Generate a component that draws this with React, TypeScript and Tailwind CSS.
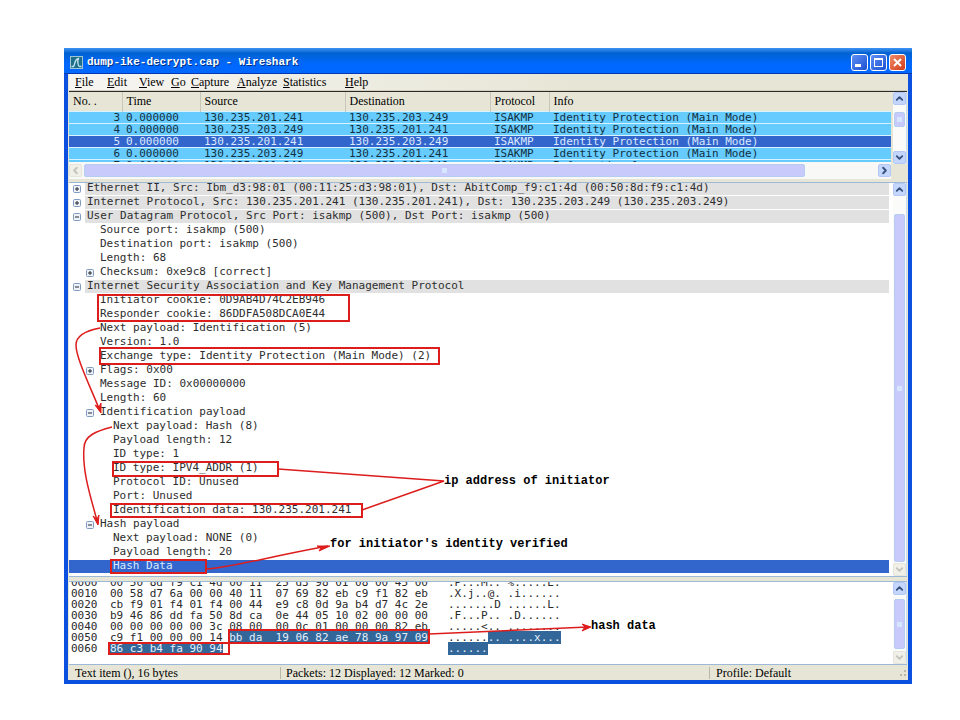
import clsx from 'clsx'
import { ChevronDown, ChevronLeft, ChevronRight, ChevronUp } from 'lucide-react'

interface Packet {
  no: number
  time: string
  source: string
  destination: string
  info: string
}

interface TreeNode {
  text: string
  level: 0 | 1 | 2
  toggle?: '+' | '-'
  selected?: boolean
}

interface HexRow {
  offset: string
  hex: [string, string]
  ascii: [string, string]
}

const MENU = [
  { label: 'File', width: 'w-8' },
  { label: 'Edit', width: 'w-8' },
  { label: 'View', width: 'w-8' },
  { label: 'Go', width: 'w-5' },
  { label: 'Capture', width: 'w-[46px]' },
  { label: 'Analyze', width: 'w-[46px]' },
  { label: 'Statistics', width: 'w-[62px]' },
  { label: 'Help', width: 'w-8' },
]

const COLUMNS = [
  { label: 'No. .', width: 'w-[53px]' },
  { label: 'Time', width: 'w-[78px]' },
  { label: 'Source', width: 'w-[145px]' },
  { label: 'Destination', width: 'w-[145px]' },
  { label: 'Protocol', width: 'w-[59px]' },
  { label: 'Info', width: '' },
]

const A = '130.235.201.241'
const B = '130.235.203.249'
const MAIN_MODE = 'Identity Protection (Main Mode)'

const PACKETS: Packet[] = [
  { no: 3, time: '0.000000', source: A, destination: B, info: MAIN_MODE },
  { no: 4, time: '0.000000', source: B, destination: A, info: MAIN_MODE },
  { no: 5, time: '0.000000', source: A, destination: B, info: MAIN_MODE },
  { no: 6, time: '0.000000', source: B, destination: A, info: MAIN_MODE },
  { no: 7, time: '0.000000', source: A, destination: B, info: 'Informational' },
]

const TREE: TreeNode[] = [
  { level: 0, toggle: '+', text: 'Ethernet II, Src: Ibm_d3:98:01 (00:11:25:d3:98:01), Dst: AbitComp_f9:c1:4d (00:50:8d:f9:c1:4d)' },
  { level: 0, toggle: '+', text: 'Internet Protocol, Src: 130.235.201.241 (130.235.201.241), Dst: 130.235.203.249 (130.235.203.249)' },
  { level: 0, toggle: '-', text: 'User Datagram Protocol, Src Port: isakmp (500), Dst Port: isakmp (500)' },
  { level: 1, text: 'Source port: isakmp (500)' },
  { level: 1, text: 'Destination port: isakmp (500)' },
  { level: 1, text: 'Length: 68' },
  { level: 1, toggle: '+', text: 'Checksum: 0xe9c8 [correct]' },
  { level: 0, toggle: '-', text: 'Internet Security Association and Key Management Protocol' },
  { level: 1, text: 'Initiator cookie: 0D9AB4D74C2EB946' },
  { level: 1, text: 'Responder cookie: 86DDFA508DCA0E44' },
  { level: 1, text: 'Next payload: Identification (5)' },
  { level: 1, text: 'Version: 1.0' },
  { level: 1, text: 'Exchange type: Identity Protection (Main Mode) (2)' },
  { level: 1, toggle: '+', text: 'Flags: 0x00' },
  { level: 1, text: 'Message ID: 0x00000000' },
  { level: 1, text: 'Length: 60' },
  { level: 1, toggle: '-', text: 'Identification payload' },
  { level: 2, text: 'Next payload: Hash (8)' },
  { level: 2, text: 'Payload length: 12' },
  { level: 2, text: 'ID type: 1' },
  { level: 2, text: 'ID type: IPV4_ADDR (1)' },
  { level: 2, text: 'Protocol ID: Unused' },
  { level: 2, text: 'Port: Unused' },
  { level: 2, text: 'Identification data: 130.235.201.241' },
  { level: 1, toggle: '-', text: 'Hash payload' },
  { level: 2, text: 'Next payload: NONE (0)' },
  { level: 2, text: 'Payload length: 20' },
  { level: 2, text: 'Hash Data', selected: true },
]

// second entry of each pair is the highlighted part
const HEX: HexRow[] = [
  { offset: '0000', hex: ['00 50 8d f9 c1 4d 00 11  25 d3 98 01 08 00 45 00', ''], ascii: ['.P...M.. %.....E.', ''] },
  { offset: '0010', hex: ['00 58 d7 6a 00 00 40 11  07 69 82 eb c9 f1 82 eb', ''], ascii: ['.X.j..@. .i......', ''] },
  { offset: '0020', hex: ['cb f9 01 f4 01 f4 00 44  e9 c8 0d 9a b4 d7 4c 2e', ''], ascii: ['.......D ......L.', ''] },
  { offset: '0030', hex: ['b9 46 86 dd fa 50 8d ca  0e 44 05 10 02 00 00 00', ''], ascii: ['.F...P.. .D......', ''] },
  { offset: '0040', hex: ['00 00 00 00 00 3c 08 00  00 0c 01 00 00 00 82 eb', ''], ascii: ['.....<.. ........', ''] },
  { offset: '0050', hex: ['c9 f1 00 00 00 14 ', 'bb da  19 06 82 ae 78 9a 97 09'], ascii: ['......', '.. ....x...'] },
  { offset: '0060', hex: ['', '86 c3 b4 fa 90 94'], ascii: ['', '......'] },
]

const CHEVRONS = { up: ChevronUp, down: ChevronDown, left: ChevronLeft, right: ChevronRight }

function ScrollButton({ dir, disabled = false }: { dir: keyof typeof CHEVRONS; disabled?: boolean }) {
  const Icon = CHEVRONS[dir]
  return (
    <button
      aria-label={`Scroll ${dir}`}
      disabled={disabled}
      className={clsx(
        'w-[13px] h-[13px] shrink-0 rounded-[2px] flex items-center justify-center border',
        disabled ? 'bg-[#f0efe8] border-[#e6e5dc] text-[#c4c3bb]' : 'bg-[#c4d6fc] border-[#b3c8f2] text-[#33507f]',
      )}
    >
      <Icon size={11} strokeWidth={4} />
    </button>
  )
}

function Thumb({ className }: { className: string }) {
  return (
    <div
      className={clsx(
        'rounded-[2px] bg-[#c8cafc] border border-[#b4cdf0] flex items-center justify-center',
        className,
      )}
    >
      <span className="w-[5px] h-[5px] bg-[#d6e6ff]" />
    </div>
  )
}

function TitleBar() {
  return (
    <header className="h-[26px] shrink-0 flex items-center px-[6px] pt-[3px] gap-1 border-b border-[#0038b8] bg-linear-to-b from-[#3d95f5] via-[#0062d0] via-20% to-[#0068ff] to-65%">
      <svg width="13" height="13" viewBox="0 0 13 13" className="shrink-0">
        <rect width="13" height="13" fill="#9fc4d4" />
        <rect x="1" y="1" width="11" height="11" fill="#1d6f8c" />
        <path d="M1.500 10.500H3.500C5 9 4.500 3 8.500 2.500C7.300 5 7.800 10 9.500 10.500H11.500" fill="none" stroke="#c4e6ee" strokeWidth="1.300" />
      </svg>
      <h1 className="flex-1 font-['Liberation_Mono',monospace] text-[11px] font-bold leading-none text-white whitespace-pre [text-shadow:1px_1px_0_#003080]">
        dump-ike-decrypt.cap - Wireshark
      </h1>
      <div className="flex gap-[2px]">
        <button aria-label="Minimize" className="w-[17px] h-[17px] rounded-[3px] border border-white bg-linear-to-br from-[#5f8ff5] to-[#1c4fd0] flex items-end p-[3px]">
          <span className="w-[6px] h-[3px] bg-white" />
        </button>
        <button aria-label="Maximize" className="w-[17px] h-[17px] rounded-[3px] border border-white bg-linear-to-br from-[#5f8ff5] to-[#1c4fd0] flex items-center justify-center">
          <span className="w-[9px] h-[9px] border border-t-2 border-white" />
        </button>
        <button aria-label="Close" className="w-[17px] h-[17px] rounded-[3px] border border-white bg-linear-to-br from-[#f08a68] to-[#d03a14] flex items-center justify-center">
          <svg width="9" height="9" viewBox="0 0 9 9">
            <path d="M1 1L8 8M8 1L1 8" stroke="#fff" strokeWidth="2" />
          </svg>
        </button>
      </div>
    </header>
  )
}

function MenuBar() {
  return (
    <nav className="h-[17px] shrink-0 flex items-center pl-[6px] bg-linear-to-r from-[#f6f5f2] to-[#e7e6d6] to-60% border-b border-[#d0cfc0]">
      {MENU.map(item => (
        <button key={item.label} className={clsx('text-left leading-none', item.width)}>
          <span className="underline">{item.label[0]}</span>
          {item.label.slice(1)}
        </button>
      ))}
    </nav>
  )
}

function PacketList() {
  return (
    <section className="shrink-0 flex border-t border-[#2c2a28]">
      <div className="flex-1 min-w-0">
        <div className="h-[70px] overflow-hidden">
          <table className="w-full table-fixed border-collapse">
            <thead>
              <tr className="h-[19px] bg-[#e7e6d6]">
                {COLUMNS.map((col, i) => (
                  <th
                    key={col.label}
                    className={clsx('p-0 pl-1 text-left font-normal leading-none', col.width, i > 0 && 'border-l border-[#c9c8b8]')}
                  >
                    {col.label}
                  </th>
                ))}
              </tr>
            </thead>
            <tbody className="font-['DejaVu_Sans_Mono',monospace] text-[11px] leading-[11px]">
              {PACKETS.map(p => (
                <tr
                  key={p.no}
                  className={clsx(
                    'h-3 border-t border-[#d8f2ff]',
                    p.no === 5 ? 'bg-[#3366cc] text-[#dbe8ff]' : 'bg-[#66ccff] text-[#12303f]',
                  )}
                >
                  <td className="p-0 pr-[2px] text-right">{p.no}</td>
                  <td className="p-0 pl-1">{p.time}</td>
                  <td className="p-0 pl-1">{p.source}</td>
                  <td className="p-0 pl-1">{p.destination}</td>
                  <td className="p-0 pl-1">ISAKMP</td>
                  <td className="p-0 pl-1 whitespace-nowrap">{p.info}</td>
                </tr>
              ))}
            </tbody>
          </table>
        </div>
        <div className="h-[17px] flex items-center bg-[#f8f8f6]">
          <ScrollButton dir="left" disabled />
          <div className="flex-1 px-[2px]">
            <Thumb className="w-[91%] h-[13px]" />
          </div>
          <ScrollButton dir="right" />
        </div>
      </div>
      <div className="w-[14px] ml-[2px] mb-[15px] flex flex-col items-center bg-[#fbfbf9] border-r border-[#c5dff0]">
        <ScrollButton dir="up" />
        <div className="flex-1 w-full pt-[7px]">
          <Thumb className="w-[11px] mx-auto h-[15px]" />
        </div>
        <ScrollButton dir="down" />
      </div>
    </section>
  )
}

function Toggle({ sign }: { sign: '+' | '-' }) {
  return (
    <button aria-label={sign === '+' ? 'Expand' : 'Collapse'} className="block">
      <svg width="8" height="8" viewBox="0 0 8 8">
        <rect x="0.500" y="0.500" width="7" height="7" rx="1" fill="#eef2f8" stroke="#7f9cc0" />
        <path d={sign === '+' ? 'M2 4H6M4 2V6' : 'M2 4H6'} stroke="#202830" />
      </svg>
    </button>
  )
}

function DetailTree() {
  return (
    <section className="flex-1 min-h-0 flex border-y border-[#9db9d8] bg-white">
      <div className="flex-1 min-w-0 overflow-hidden">
        {/* scrolled by a few pixels, so the first row is cut */}
        <ul className="-mt-[2px] font-['DejaVu_Sans_Mono',monospace] text-[11px] leading-[11px] text-[#2e2e2e]">
          {TREE.map((node, i) => (
            <li
              key={i}
              className={clsx(
                'h-[14px] flex items-stretch mr-[2px] border-t border-white whitespace-pre',
                node.level === 1 && 'pl-[13px]',
                node.level === 2 && 'pl-[26px]',
                node.selected && 'bg-[#3366cc] text-[#dbe8ff]',
              )}
            >
              <span className="w-4 shrink-0 flex items-center pl-1">
                {node.toggle && <Toggle sign={node.toggle} />}
              </span>
              <span className={clsx('flex-1 pl-[2px]', node.level === 0 && 'bg-[#e1e1e1]')}>{node.text}</span>
            </li>
          ))}
        </ul>
      </div>
      <div className="w-[14px] ml-[2px] flex flex-col items-center bg-[#fbfbf9] border-r border-[#c5dff0]">
        <ScrollButton dir="up" />
        <div className="flex-1 w-full pt-[18px] pb-px flex">
          <Thumb className="w-[11px] mx-auto" />
        </div>
        <ScrollButton dir="down" disabled />
      </div>
    </section>
  )
}

function HexPane() {
  return (
    <section className="h-[84px] shrink-0 mt-1 flex border-y border-[#9db9d8] bg-white">
      <div className="flex-1 min-w-0 overflow-hidden">
        <div className="-mt-[5px] pl-[2px] font-['DejaVu_Sans_Mono',monospace] text-[11px] leading-[11px] text-[#2a2a2a] whitespace-pre">
          {HEX.map(row => (
            <div key={row.offset} className="flex h-[11px]">
              <span className="w-[39px]">{row.offset}</span>
              <span className="w-[338px]">
                {row.hex[0]}
                {row.hex[1] && <mark className="bg-[#336699] text-[#e6f0fa]">{row.hex[1]}</mark>}
              </span>
              <span>
                {row.ascii[0]}
                {row.ascii[1] && <mark className="bg-[#336699] text-[#e6f0fa]">{row.ascii[1]}</mark>}
              </span>
            </div>
          ))}
        </div>
      </div>
      <div className="w-[14px] flex flex-col items-center bg-[#fbfbf9] border-r border-[#c5dff0]">
        <ScrollButton dir="up" />
        <div className="flex-1 w-full pt-1 pb-[2px] flex">
          <Thumb className="w-[11px] mx-auto" />
        </div>
        <ScrollButton dir="down" disabled />
      </div>
    </section>
  )
}

function StatusBar() {
  return (
    <footer className="h-[15px] shrink-0 flex items-center bg-[#e7e6d6] leading-none">
      <span className="w-[211px] pl-[6px]">Text item (), 16 bytes</span>
      <span className="flex-1 pl-[5px] border-l border-[#b8b7a8]">Packets: 12 Displayed: 12 Marked: 0</span>
      <span className="w-[190px] pl-[6px] border-l border-[#b8b7a8]">Profile: Default</span>
      <svg width="8" height="8" viewBox="0 0 8 8" fill="#b8b7a8">
        <path d="M5 1h2v2h-2zM1 5h2v2h-2zM5 5h2v2h-2z" />
      </svg>
    </footer>
  )
}

function Annotations() {
  return (
    <div className="absolute inset-0 pointer-events-none font-['Liberation_Mono',monospace] text-[12px] leading-[14px] font-bold text-black whitespace-pre">
      <svg width="848" height="640" viewBox="64 48 848 640" className="absolute left-0 top-0" fill="none" stroke="#dd1c1c" strokeWidth="2">
        <rect x="98" y="295" width="251" height="26" />
        <rect x="100" y="348" width="339" height="16" />
        <rect x="113" y="462" width="165" height="14" />
        <rect x="111" y="504" width="251" height="13" />
        <rect x="111" y="560" width="95" height="13" />
        <path d="M109 643H229V654H109ZM229 630H429V643H229Z" />
        <g strokeWidth="1.500">
          <path d="M100 328C84 331 76 336 76 345C76 358 90 386 100 411" />
          <path d="M112 427C96 431 84 436 84 448C82 470 90 495 98 524" />
          <path d="M278 469L444 481L362 510" />
          <path d="M206 569C230 568 262 558 328 546" />
          <path d="M429 634L588 627" />
        </g>
        <g fill="#dd1c1c" strokeWidth="1">
          <path d="M101 413L95 405L99 407L101 403Z" />
          <path d="M98 525L93 516L97 519L99 515Z" />
          <path d="M330 546L317 546L321 548L319 551Z" />
          <path d="M591 627L582 624L585 627L582 631Z" />
        </g>
      </svg>
      <span className="absolute left-[380px] top-[426px]">ip address of initiator</span>
      <span className="absolute left-[266px] top-[489px]">for initiator's identity verified</span>
      <span className="absolute left-[527px] top-[571px]">hash data</span>
    </div>
  )
}

export default function App() {
  return (
    <main className="h-screen min-h-[720px] bg-white pl-16 pr-12 pt-12 pb-9">
      <div className="relative h-full flex flex-col rounded-t-[4px] bg-[#0b50de] text-black font-['Liberation_Serif',serif] text-[12px]">
        <TitleBar />
        <div className="flex-1 min-h-0 mx-[4px] mb-1 px-px flex flex-col bg-[#e7e6d6]">
          <MenuBar />
          <PacketList />
          <div className="h-[3px] shrink-0" />
          <DetailTree />
          <HexPane />
          <StatusBar />
        </div>
        <Annotations />
      </div>
    </main>
  )
}
